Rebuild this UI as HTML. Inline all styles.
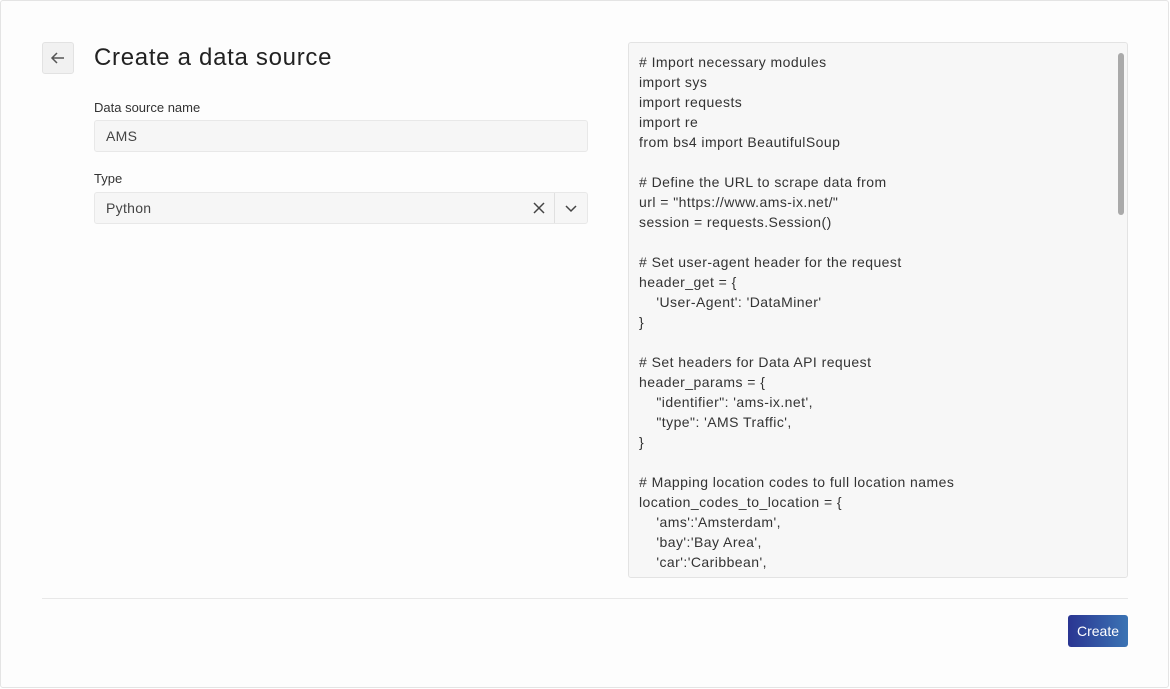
<!DOCTYPE html>
<html><head><style>
body{margin:0;width:1170px;height:689px;background:#fff;font-family:"Liberation Sans",sans-serif;position:relative;overflow:hidden}
.frame{position:absolute;left:0;top:0;width:1167px;height:686px;border:1px solid #e4e4e4;border-radius:3px;background:#fdfdfd}
.back{position:absolute;left:42px;top:42px;width:30px;height:30px;border:1px solid #e2e2e2;border-radius:3px;background:#f1f1f1}
h1{position:absolute;left:94px;top:43px;margin:0;font-weight:normal;font-size:24px;letter-spacing:0.7px;color:#222;line-height:30px}
.lbl{position:absolute;left:94px;font-size:13px;color:#333}
.inp{position:absolute;left:94px;width:492px;height:30px;border:1px solid #e8e8e8;border-radius:3px;background:#f6f6f6;font-size:14px;color:#444;line-height:30px;box-sizing:content-box}
.inp span{margin-left:11px;letter-spacing:0.3px}
.code{position:absolute;left:628px;top:42px;width:498px;height:534px;border:1px solid #e3e3e3;border-radius:3px;background:#f7f7f7;overflow:hidden}
.code pre{margin:0;padding:9px 0 0 10px;font-family:"Liberation Sans",sans-serif;font-size:14px;letter-spacing:0.45px;line-height:20px;color:#333}
.sb{position:absolute;left:489px;top:10px;width:6px;height:162px;border-radius:3px;background:#aaa}
.hr{position:absolute;left:42px;top:598px;width:1086px;height:1px;background:#e8e8e8}
.btn{position:absolute;left:1068px;top:615px;width:60px;height:32px;border-radius:3px;background:linear-gradient(90deg,#2a3592,#3b74b4);color:#fff;font-size:14px;line-height:32px;text-align:center}
</style></head><body>
<div class="frame"></div>
<div class="back"><svg width="30" height="30" viewBox="0 0 30 30"><path d="M21 15H9M14 10l-5 5 5 5" stroke="#555" stroke-width="1.5" fill="none"/></svg></div>
<h1>Create a data source</h1>
<div class="lbl" style="top:100px">Data source name</div>
<div class="inp" style="top:120px"><span>AMS</span></div>
<div class="lbl" style="top:171px">Type</div>
<div class="inp" style="top:192px"><span>Python</span>
<svg style="position:absolute;left:432px;top:0" width="60" height="30" viewBox="0 0 60 30"><path d="M7 10l10 10M17 10L7 20" stroke="#444" stroke-width="1.5"/><line x1="27.5" y1="0" x2="27.5" y2="30" stroke="#e0e0e0"/><path d="M39 13l5 5 5-5" stroke="#444" stroke-width="1.5" fill="none"/></svg></div>
<div class="code"><pre># Import necessary modules
import sys
import requests
import re
from bs4 import BeautifulSoup

# Define the URL to scrape data from
url = "https://www.ams-ix.net/"
session = requests.Session()

# Set user-agent header for the request
header_get = {
    'User-Agent': 'DataMiner'
}

# Set headers for Data API request
header_params = {
    "identifier": 'ams-ix.net',
    "type": 'AMS Traffic',
}

# Mapping location codes to full location names
location_codes_to_location = {
    'ams':'Amsterdam',
    'bay':'Bay Area',
    'car':'Caribbean',</pre><div class="sb"></div></div>
<div class="hr"></div>
<div class="btn">Create</div>
</body></html>
